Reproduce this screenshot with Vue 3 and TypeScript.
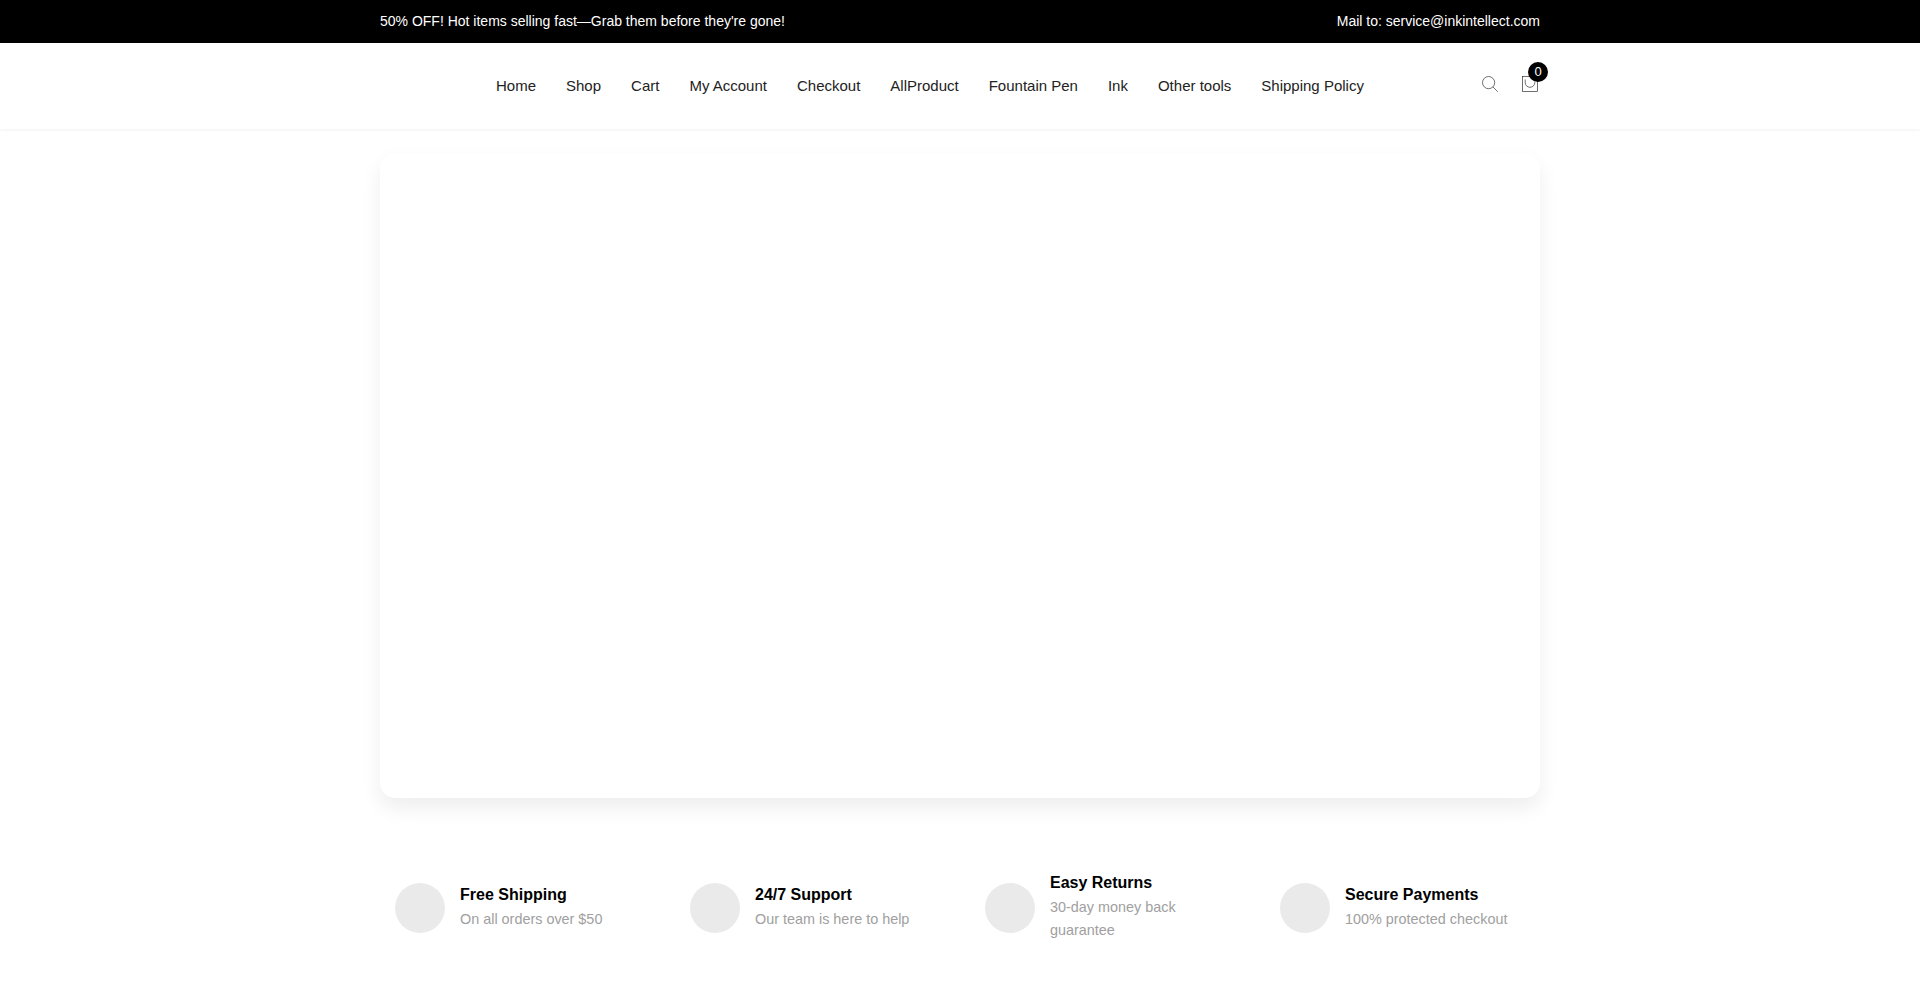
<script setup lang="ts">
const navLinks = [
  "Home",
  "Shop",
  "Cart",
  "My Account",
  "Checkout",
  "AllProduct",
  "Fountain Pen",
  "Ink",
  "Other tools",
  "Shipping Policy",
];

const features = [
  { title: "Free Shipping", text: "On all orders over $50" },
  { title: "24/7 Support", text: "Our team is here to help" },
  { title: "Easy Returns", text: "30-day money back guarantee" },
  { title: "Secure Payments", text: "100% protected checkout" },
];
</script>

<template>
  <div class="page">
    <div class="topbar">
      <div class="topbar-inner">
        <span>50% OFF! Hot items selling fast—Grab them before they're gone!</span>
        <span>Mail to: service@inkintellect.com</span>
      </div>
    </div>

    <header class="header">
      <div class="header-inner">
        <nav class="nav">
          <a v-for="link in navLinks" :key="link" href="#">{{ link }}</a>
        </nav>
        <div class="header-icons">
          <a href="#" class="icon-link" aria-label="Search">
            <svg width="16" height="16" viewBox="0 0 16 16" fill="none" stroke="#333" stroke-width="0.7">
              <circle cx="6.6" cy="6.6" r="6.1" />
              <path d="M11 11 15.8 15.8" />
            </svg>
          </a>
          <a href="#" class="icon-link cart" aria-label="Cart">
            <svg width="16" height="16" viewBox="0 0 16 16" fill="none" stroke="#333" stroke-width="0.7">
              <rect x="0.4" y="0.4" width="15.2" height="15.2" />
              <path d="M3.2 3.5v3a4.8 4.8 0 0 0 9.6 0v-1" />
            </svg>
            <span class="badge">0</span>
          </a>
        </div>
      </div>
    </header>

    <main class="main">
      <section class="hero-card" />

      <section class="features">
        <div v-for="item in features" :key="item.title" class="feature">
          <div class="feature-icon" />
          <div>
            <h3>{{ item.title }}</h3>
            <p>{{ item.text }}</p>
          </div>
        </div>
      </section>
    </main>
  </div>
</template>

<style>
html,
body {
  margin: 0;
  background: #fff;
}
</style>

<style scoped>
.page {
  font-family: "Liberation Sans", Arial, sans-serif;
  color: #222;
  height: 993px;
  overflow: hidden;
}

.topbar {
  background: #000;
  color: #fff;
  font-size: 14px;
  height: 43px;
}

.topbar-inner {
  width: 1160px;
  height: 41px;
  margin: 0 auto;
  display: flex;
  justify-content: space-between;
  align-items: center;
}

.header {
  height: 86px;
  box-shadow: 0 1px 3px rgba(0, 0, 0, 0.06);
}

.header-inner {
  width: 1160px;
  height: 84px;
  margin: 0 auto;
  position: relative;
  display: flex;
  align-items: center;
}

.nav {
  display: flex;
  gap: 30px;
  margin-left: 116px;
  font-size: 15px;
}

.nav a {
  color: #222;
  text-decoration: none;
}

.header-icons {
  margin-left: auto;
  margin-right: 2px;
  margin-top: -2px;
  display: flex;
  gap: 24px;
}

.icon-link {
  display: block;
  width: 16px;
  height: 16px;
  position: relative;
}

.icon-link svg {
  display: block;
}

.badge {
  position: absolute;
  top: -14px;
  left: 6px;
  width: 20px;
  height: 20px;
  border-radius: 50%;
  background: #000;
  color: #fff;
  font-size: 13px;
  line-height: 20px;
  text-align: center;
}

.main {
  width: 1160px;
  margin: 0 auto;
}

.hero-card {
  margin-top: 24px;
  height: 645px;
  background: #fff;
  border-radius: 15px;
  box-shadow: 0 10px 20px rgba(0, 0, 0, 0.07);
}

.features {
  display: grid;
  grid-template-columns: repeat(4, 245px);
  gap: 50px;
  padding: 0 15px;
  margin-top: 76px;
}

.feature {
  display: flex;
  align-items: center;
  gap: 15px;
}

.feature-icon {
  flex: none;
  width: 50px;
  height: 50px;
  border-radius: 50%;
  background: #eaeaea;
}

h3 {
  margin: 0 0 4px;
  font-size: 16px;
  line-height: 18px;
  font-weight: 700;
  color: #000;
}

p {
  margin: 0;
  font-size: 14.4px;
  line-height: 23px;
  color: #a0a0a0;
}
</style>
